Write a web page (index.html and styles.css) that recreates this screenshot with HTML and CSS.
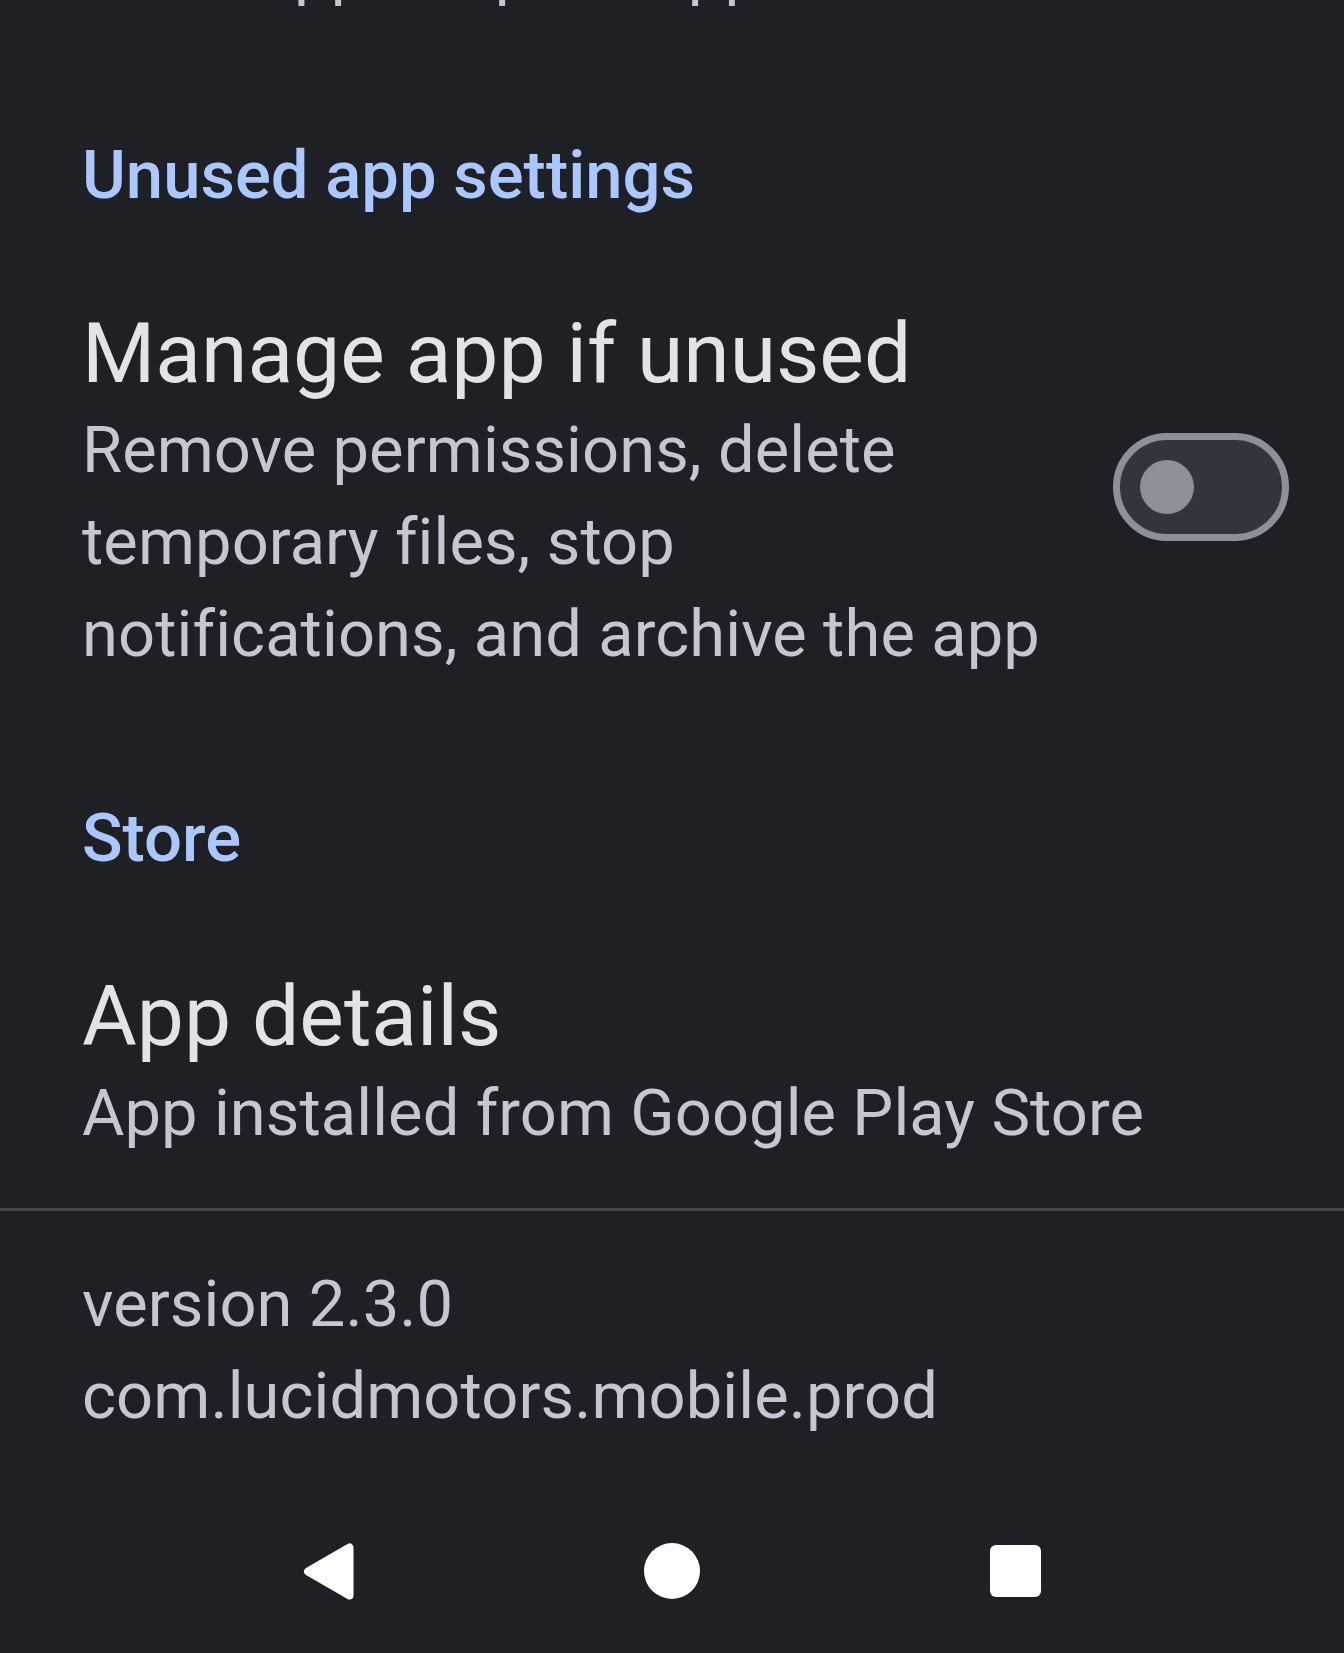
FILE: index.html
```html
<!DOCTYPE html>
<html lang="en">
<head>
<meta charset="utf-8">
<title>App info</title>
<link rel="stylesheet" href="styles.css">
</head>
<body>
<div class="screen">
  <main class="content">
    <p class="summary cut">Allow app to open supported links</p>
    <h2 class="section first">Unused app settings</h2>
    <div class="pref">
      <div class="pref-text">
        <div class="title">Manage app if unused</div>
        <div class="summary">Remove permissions, delete<br>temporary files, stop<br>notifications, and archive the app</div>
      </div>
      <div class="switch"><span class="thumb"></span></div>
    </div>
    <h2 class="section">Store</h2>
    <div class="pref">
      <div class="pref-text">
        <div class="title">App details</div>
        <div class="summary">App installed from Google Play Store</div>
      </div>
    </div>
  </main>
  <div class="divider"></div>
  <div class="footer summary">version 2.3.0<br>com.lucidmotors.mobile.prod</div>
  <nav class="navbar">
    <svg class="nav-back" width="51" height="57" viewBox="0 0 51 57"><polygon points="5,28.5 46.5,4.5 46.5,52.5" fill="#fff" stroke="#fff" stroke-width="8" stroke-linejoin="round"/></svg>
    <span class="nav-home"></span>
    <span class="nav-recents"></span>
  </nav>
</div>
</body>
</html>
```
FILE: styles.css
```css
html, body {
  margin: 0;
  padding: 0;
  background: #1f2025;
}
body {
  font-family: "Roboto", "Inter", "Noto Sans", sans-serif;
  overflow: hidden;
}
.screen {
  width: 1344px;
  height: 1653px;
  display: flex;
  flex-direction: column;
  overflow: hidden;
}
.content {
  padding: 0 55px 0 82px;
  display: flex;
  flex-direction: column;
}
.summary {
  font-size: 65px;
  line-height: 92px;
  letter-spacing: 0.1px;
  color: #c5c6d0;
  margin: 0;
}
.cut {
  margin-top: -75px;
  white-space: nowrap;
}
.section {
  margin: 118px 0 0;
  font-size: 67px;
  line-height: 80px;
  font-weight: 500;
  color: #aac7ff;
}
.pref {
  display: flex;
  align-items: center;
  margin-top: 89px;
}
.pref-text {
  flex: 1;
  min-width: 0;
}
.title {
  font-size: 84px;
  line-height: 100px;
  color: #e3e2e9;
}
.switch {
  box-sizing: content-box;
  width: 142px;
  height: 94px;
  padding-left: 20px;
  margin-bottom: 10px;
  border: 7px solid #8e9099;
  border-radius: 60px;
  background: #33353c;
  display: flex;
  align-items: center;
}
.thumb {
  width: 54px;
  height: 54px;
  border-radius: 50%;
  background: #8e9099;
}
.divider {
  height: 3px;
  background: #46474d;
  margin-top: 49px;
}
.footer {
  margin-top: 47px;
  padding-left: 82px;
}
.navbar {
  margin-top: auto;
  height: 164px;
  display: flex;
  align-items: center;
  justify-content: center;
  gap: 290px;
}
.nav-back {
  display: block;
}
.nav-home {
  width: 56px;
  height: 56px;
  border-radius: 50%;
  background: #fff;
}
.nav-recents {
  width: 51px;
  height: 52px;
  border-radius: 6px;
  background: #fff;
}
```
